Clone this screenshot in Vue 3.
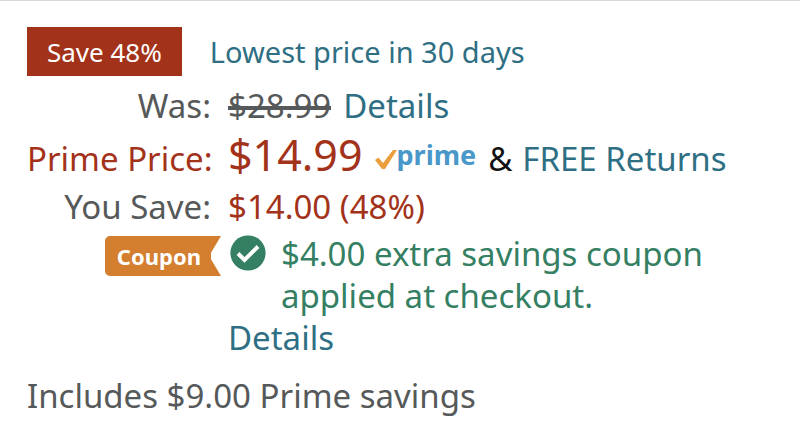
<script setup>
const price = {
  was: '$28.99',
  now: '$14.99',
  saved: '$14.00 (48%)'
}
</script>

<template>
  <main class="price-block">
    <div class="deal">
      <span class="badge">Save 48%</span>
      <a class="link lowest" href="#">Lowest price in 30 days</a>
    </div>

    <dl class="prices">
      <dt>Was:</dt>
      <dd class="was-row"><s>{{ price.was }}</s><a class="link" href="#">Details</a></dd>

      <dt class="deal-color">Prime Price:</dt>
      <dd class="prime-row">
        <span class="now">{{ price.now }}</span>
        <span class="prime">
          <svg class="tick" viewBox="0 0 22 22" aria-hidden="true">
            <path d="M0 12 L3.5 9.5 L8 15 L18 2 H22 L10 21 H7 Z" />
          </svg>
          <span>prime</span>
        </span>
        <span class="amp">&amp;</span>
        <a class="link" href="#">FREE Returns</a>
      </dd>

      <dt>You Save:</dt>
      <dd class="deal-color">{{ price.saved }}</dd>

      <dt class="coupon-label"><span class="coupon">Coupon</span></dt>
      <dd class="coupon-row">
        <svg class="check" viewBox="0 0 36 36" aria-hidden="true">
          <circle cx="18" cy="18" r="17.6" />
          <path d="M8 18.5 L14.5 25 L28 11.5" />
        </svg>
        <p>$4.00 extra savings coupon applied at checkout.</p>
        <a class="link more" href="#">Details</a>
      </dd>
    </dl>

    <p class="includes">Includes $9.00 Prime savings</p>
  </main>
</template>

<style>
body {
  margin: 0;
  background: #fff;
}
</style>

<style scoped>
.price-block {
  padding: 26px 27px 0;
  border-top: 1px solid #d5d9d9;
  color: #565959;
  font-family: "Noto Sans", "Open Sans", sans-serif;
  font-size: 33px;
  line-height: 42px;
}
.link {
  color: #2f6f84;
  text-decoration: none;
}
.deal {
  display: flex;
  align-items: center;
  gap: 28px;
}
.badge {
  box-sizing: border-box;
  height: 49px;
  padding: 0 20px;
  background: #a3321a;
  color: #fff;
  font-size: 26px;
  line-height: 50px;
}
.lowest {
  font-size: 29px;
}
.prices {
  display: grid;
  grid-template-columns: 184px 1fr;
  grid-template-rows: 54px 52px 44px auto;
  column-gap: 17px;
  align-items: center;
  margin: 3px 0 0;
}
dt {
  text-align: right;
  white-space: nowrap;
}
dd {
  margin: 0;
  white-space: nowrap;
}
.deal-color {
  color: #a3321a;
}
.was-row {
  display: flex;
  gap: 12px;
}
s {
  background: linear-gradient(currentColor, currentColor) 0 56% / 100% 4px no-repeat;
  text-decoration: none;
}
.prime-row {
  display: flex;
  align-items: baseline;
  padding-bottom: 4px;
  line-height: 36px;
}
.now {
  color: #a3321a;
  font-size: 43px;
}
.prime {
  display: flex;
  align-items: center;
  margin: 0 12px;
  padding-bottom: 4px;
  align-self: center;
  color: #4a98c9;
  font-size: 27px;
  font-weight: 700;
  line-height: 32px;
}
.tick {
  width: 22px;
  height: 22px;
  margin-top: 7px;
  fill: #eb9e3c;
}
.amp {
  margin-right: 10px;
  color: #111;
}
.coupon-label {
  display: flex;
  justify-content: flex-end;
  align-self: start;
  margin-right: -10px;
  padding-top: 7px;
}
.coupon {
  padding: 0 20px 0 12px;
  border-radius: 5px 0 0 5px;
  background: #d47e30;
  clip-path: polygon(0 0, 100% 0, calc(100% - 10px) 42%, calc(100% - 10px) 58%, 100% 100%, 0 100%);
  color: #fff;
  font-size: 22px;
  font-weight: 700;
  line-height: 40px;
}
.coupon-row {
  display: grid;
  grid-template-columns: 36px minmax(0, 440px);
  column-gap: 17px;
  padding-top: 4px;
  white-space: normal;
}
.coupon-row p {
  margin: 0;
  color: #357f63;
}
.check {
  width: 36px;
  height: 36px;
  margin-top: 2px;
  margin-left: 2px;
  fill: #357f63;
}
.check path {
  fill: none;
  stroke: #fff;
  stroke-width: 4;
}
.more {
  grid-column: 1 / -1;
}
.includes {
  margin: 16px 0 0;
}
</style>
